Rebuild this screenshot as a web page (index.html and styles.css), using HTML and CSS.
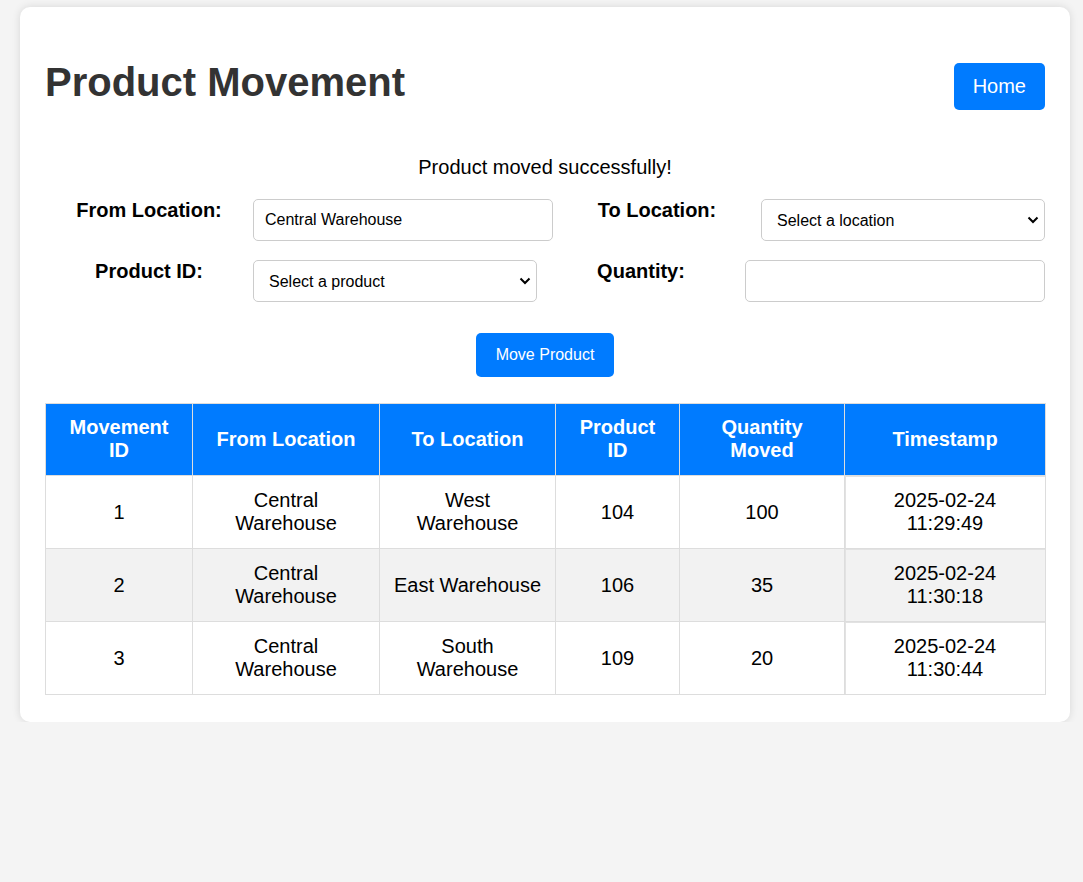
FILE: index.html
```html
<!DOCTYPE html>
<html lang="en">
<head>
<meta charset="utf-8">
<title>Product Movement</title>
<link rel="stylesheet" href="styles.css">
</head>
<body>
<div class="container">
  <div class="header">
    <h1 class="title">Product Movement</h1>
    <a class="home-btn" href="#">Home</a>
  </div>
  <p class="message">Product moved successfully!</p>
  <form class="move-form">
    <div class="form-row">
      <label class="form-label">From Location:</label>
      <input class="field field-text" type="text" value="Central Warehouse">
      <label class="form-label">To Location:</label>
      <span class="select-wrap">
        <select class="field field-select"><option>Select a location</option></select>
        <svg class="chev" width="12" height="8" viewBox="0 0 12 8"><path d="M1.5 1.5 L6 6 L10.5 1.5" fill="none" stroke="#000" stroke-width="2"/></svg>
      </span>
    </div>
    <div class="form-row">
      <label class="form-label">Product ID:</label>
      <span class="select-wrap">
        <select class="field field-select"><option>Select a product</option></select>
        <svg class="chev" width="12" height="8" viewBox="0 0 12 8"><path d="M1.5 1.5 L6 6 L10.5 1.5" fill="none" stroke="#000" stroke-width="2"/></svg>
      </span>
      <label class="form-label">Quantity:</label>
      <input class="field field-text" type="text">
    </div>
    <div class="form-actions">
      <button class="submit-btn" type="button">Move Product</button>
    </div>
  </form>
  <table class="moves">
    <colgroup>
      <col class="c1"><col class="c2"><col class="c3"><col class="c4"><col class="c5"><col class="c6">
    </colgroup>
    <thead>
      <tr><th>Movement ID</th><th>From Location</th><th>To Location</th><th>Product ID</th><th>Quantity Moved</th><th>Timestamp</th></tr>
    </thead>
    <tbody>
      <tr><td>1</td><td>Central Warehouse</td><td>West Warehouse</td><td>104</td><td>100</td><td class="ts">2025-02-24 11:29:49</td></tr>
      <tr><td>2</td><td>Central Warehouse</td><td>East Warehouse</td><td>106</td><td>35</td><td class="ts">2025-02-24 11:30:18</td></tr>
      <tr><td>3</td><td>Central Warehouse</td><td>South Warehouse</td><td>109</td><td>20</td><td class="ts">2025-02-24 11:30:44</td></tr>
    </tbody>
  </table>
</div>
</body>
</html>
```
FILE: styles.css
```css
html, body {
  margin: 0;
  padding: 0;
}
body {
  background: #f4f4f4;
  font-family: "Liberation Sans", Arial, sans-serif;
  color: #000;
}
.container {
  width: 1000px;
  margin: 7px 0 0 20px;
  padding: 25px 25px 27px;
  background: #fff;
  border-radius: 10px;
  box-shadow: 0 0 8px rgba(0, 0, 0, 0.12);
}
.header {
  display: flex;
  justify-content: space-between;
  align-items: flex-start;
}
.title {
  margin: 27px 0;
  font-size: 40px;
  line-height: 46px;
  font-weight: bold;
  color: #333;
}
.home-btn {
  margin-top: 31px;
  padding: 12px 19px;
  background: #007bff;
  color: #fff;
  font-size: 20px;
  line-height: 23px;
  text-decoration: none;
  border-radius: 5px;
}
.message {
  margin: 24px 0 0;
  font-size: 20px;
  line-height: 23px;
  text-align: center;
}
.move-form {
  margin-top: 20px;
}
.form-row {
  display: flex;
  align-items: flex-start;
  margin-bottom: 19px;
}
.form-label {
  flex: 1;
  text-align: center;
  font-size: 20px;
  line-height: 23px;
  font-weight: bold;
}
.field {
  box-sizing: border-box;
  height: 42px;
  border: 1px solid #ccc;
  border-radius: 5px;
  background: #fff;
  font-family: "Liberation Sans", Arial, sans-serif;
  font-size: 16px;
  color: #000;
}
.field-text {
  width: 300px;
  padding: 10px 11px;
}
.select-wrap {
  position: relative;
  display: block;
  width: 284px;
  height: 42px;
}
.field-select {
  display: block;
  width: 284px;
  padding: 10px 30px 10px 15px;
  -webkit-appearance: none;
  appearance: none;
}
.chev {
  position: absolute;
  right: 6px;
  top: 17px;
  pointer-events: none;
}
.form-actions {
  display: flex;
  justify-content: center;
  padding-top: 12px;
}
.submit-btn {
  padding: 13px 20px;
  border: none;
  border-radius: 5px;
  background: #007bff;
  color: #fff;
  font-family: "Liberation Sans", Arial, sans-serif;
  font-size: 16px;
  line-height: 18px;
}
.moves {
  width: 1000px;
  margin-top: 26px;
  border-collapse: collapse;
  table-layout: fixed;
}
.c1 { width: 147px; }
.c2 { width: 187px; }
.c3 { width: 176px; }
.c4 { width: 124px; }
.c5 { width: 165px; }
.c6 { width: 201px; }
.moves th,
.moves td {
  border: 1px solid #ddd;
  padding: 13px 12px;
  text-align: center;
  font-size: 20px;
  line-height: 23px;
}
.moves th {
  padding: 12px 12px 13px;
  background: #007bff;
  color: #fff;
  font-weight: bold;
}
.moves td.ts {
  box-shadow: inset 1px 1px 0 #e2e2e2;
}
.moves tbody tr:nth-child(even) td {
  background: #f2f2f2;
}
```
